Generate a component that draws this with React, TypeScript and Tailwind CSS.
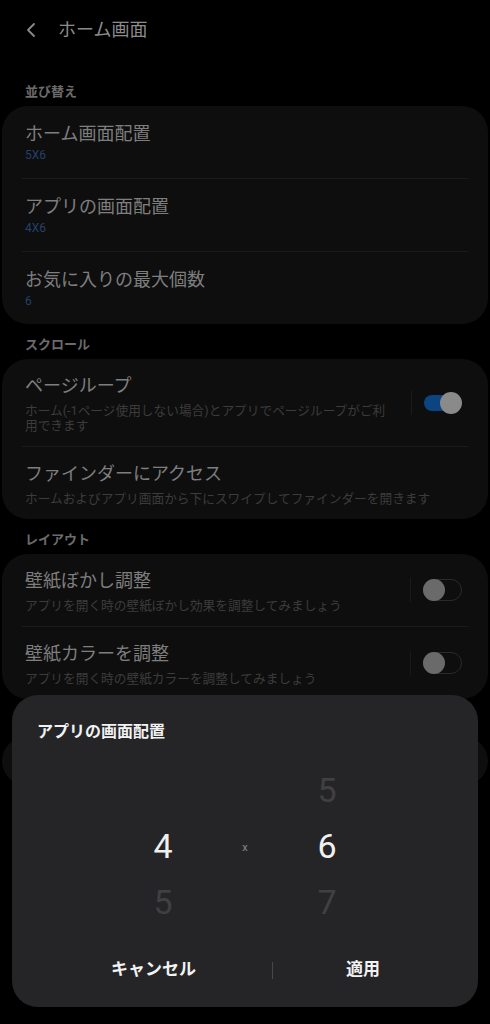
import React from "react";

const font = "font-['Roboto','Noto_Sans_CJK_JP',sans-serif]";

function SectionLabel({ children, first }: { children: React.ReactNode; first?: boolean }) {
  return (
    <div
      className={
        (first ? "mt-[24px]" : "mt-[13px]") +
        " mb-[6px] px-[25px] text-[13px] leading-[16px] font-bold text-[#6b6b6b]"
      }
    >
      {children}
    </div>
  );
}

function Separator() {
  return <div className="mx-[20px] h-px bg-[#1b1b1b]" />;
}

function ValueRow({ title, value }: { title: string; value: string }) {
  return (
    <div className="h-[72px] pl-[23px] pr-[26px] pt-[16px]">
      <div className="text-[18px] leading-[24px] text-[#7e7e7e]">{title}</div>
      <div className="mt-[1px] text-[12px] leading-[16px] text-[#24416a]">{value}</div>
    </div>
  );
}

function Toggle({ on }: { on: boolean }) {
  if (on) {
    return (
      <div className="relative h-[22px] w-[38px]">
        <div className="absolute left-0 top-[3px] h-[16px] w-[30px] rounded-full bg-[#0c4482]" />
        <div className="absolute right-0 top-0 h-[22px] w-[22px] rounded-full bg-[#8a8a8a]" />
      </div>
    );
  }
  return (
    <div className="relative h-[22px] w-[39px] rounded-full border-[1.5px] border-[#2a2a2a]">
      <div className="absolute -left-[1.5px] -top-[1.5px] h-[22px] w-[22px] rounded-full bg-[#6a6a6a]" />
    </div>
  );
}

function SwitchRow({
  title,
  desc,
  on,
  height,
}: {
  title: string;
  desc: React.ReactNode;
  on?: boolean;
  height: string;
}) {
  return (
    <div className={"flex items-center pl-[23px] pr-[26px] " + height}>
      <div className="min-w-0 flex-1 self-start pt-[15px]">
        <div className="text-[18px] leading-[24px] text-[#7e7e7e]">{title}</div>
        <div className="mt-[5px] whitespace-nowrap text-[12.7px] leading-[15px] text-[#3c3c3c]">{desc}</div>
      </div>
      {on !== undefined && (
        <div className="flex items-center">
          <div className="mr-[12px] h-[24px] w-px bg-[#1a1a1a]" />
          <Toggle on={on} />
        </div>
      )}
    </div>
  );
}

function Card({ children }: { children: React.ReactNode }) {
  return <div className="mx-[2px] rounded-[26px] bg-[#0e0e0e]">{children}</div>;
}

export default function App() {
  return (
    <div className={"relative h-[1024px] w-[490px] overflow-hidden bg-black " + font}>
      {/* Header */}
      <div className="flex h-[60px] items-center pl-[25px]">
        <svg width="14" height="16" viewBox="0 0 14 16" className="mr-[19px]">
          <path d="M9 2 L3 8 L9 14" fill="none" stroke="#8a8a8a" strokeWidth="1.8" strokeLinecap="round" strokeLinejoin="round" />
        </svg>
        <div className="text-[18px] leading-[24px] text-[#8c8c8c]">ホーム画面</div>
      </div>

      <SectionLabel first>並び替え</SectionLabel>
      <Card>
        <ValueRow title="ホーム画面配置" value="5X6" />
        <Separator />
        <ValueRow title="アプリの画面配置" value="4X6" />
        <Separator />
        <ValueRow title="お気に入りの最大個数" value="6" />
      </Card>

      <SectionLabel>スクロール</SectionLabel>
      <Card>
        <SwitchRow
          height="h-[87px]"
          title="ページループ"
          desc={
            <>
              ホーム(-1ページ使用しない場合)とアプリでページループがご利
              <br />
              用できます
            </>
          }
          on
        />
        <Separator />
        <SwitchRow
          height="h-[72px]"
          title="ファインダーにアクセス"
          desc="ホームおよびアプリ画面から下にスワイプしてファインダーを開きます"
        />
      </Card>

      <SectionLabel>レイアウト</SectionLabel>
      <Card>
        <SwitchRow
          height="h-[72px]"
          title="壁紙ぼかし調整"
          desc="アプリを開く時の壁紙ぼかし効果を調整してみましょう"
          on={false}
        />
        <Separator />
        <SwitchRow
          height="h-[72px]"
          title="壁紙カラーを調整"
          desc="アプリを開く時の壁紙カラーを調整してみましょう"
          on={false}
        />
      </Card>

      <div className="mx-[2px] mt-[38px] h-[48px] rounded-[26px] bg-[#0e0e0e]" />

      {/* Dialog */}
      <div className="absolute left-[12px] top-[695px] flex h-[312px] w-[466px] flex-col rounded-[26px] bg-[#252527]">
        <div className="pl-[25px] pt-[26px] text-[16px] leading-[22px] font-bold text-[#f2f2f2]">
          アプリの画面配置
        </div>
        <div className="mt-[19px] flex justify-center">
          <div className="flex w-[60px] flex-col items-center">
            <div className="h-[56px]" />
            <div className="flex h-[56px] items-center text-[34px] text-[#f0f0f0]">4</div>
            <div className="flex h-[56px] items-center text-[34px] text-[#404042]">5</div>
          </div>
          <div className="flex w-[104px] flex-col items-center">
            <div className="h-[56px]" />
            <div className="flex h-[56px] items-center pt-[4px] text-[11px] text-[#8a8a8a]">x</div>
          </div>
          <div className="flex w-[60px] flex-col items-center">
            <div className="flex h-[56px] items-center text-[34px] text-[#404042]">5</div>
            <div className="flex h-[56px] items-center text-[34px] text-[#f0f0f0]">6</div>
            <div className="flex h-[56px] items-center text-[34px] text-[#404042]">7</div>
          </div>
        </div>
        <div className="mt-[16px] flex h-[48px] items-center pl-[23px] pr-[25px]">
          <div className="w-[237px] text-center text-[17px] font-bold text-[#f2f2f2]">キャンセル</div>
          <div className="h-[17px] w-px bg-[#48484a]" />
          <div className="flex-1 text-center text-[17px] font-bold text-[#f2f2f2]">適用</div>
        </div>
      </div>
    </div>
  );
}
